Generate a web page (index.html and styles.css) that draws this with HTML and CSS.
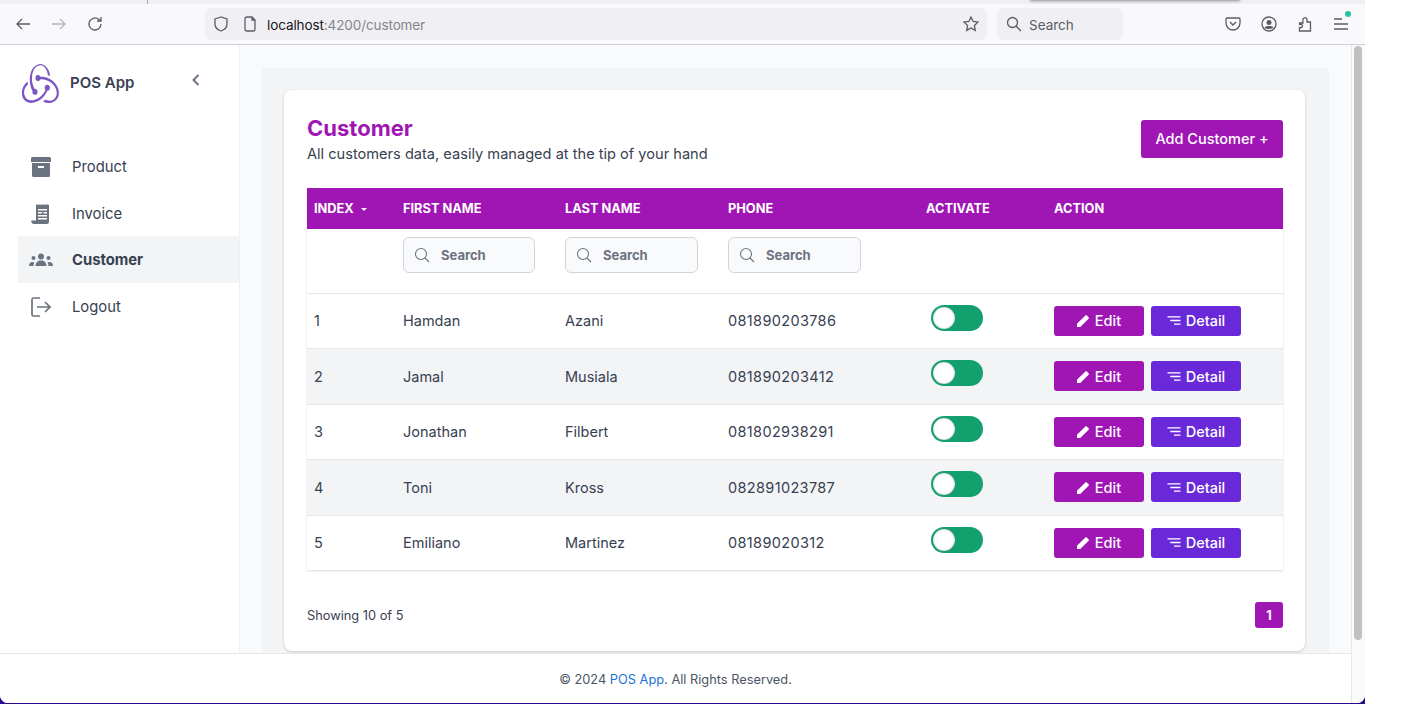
FILE: index.html
```html
<!DOCTYPE html>
<html>
<head>
<title>POS App</title>
<link rel="stylesheet" href="styles.css">
</head>
<body>
<div class="window">
  <div class="tabstrip"><span class="tab-divider"></span><span class="tab-shadow"></span></div>

  <div class="toolbar">
    <div class="nav-buttons">
      <svg class="tool-icon" viewBox="0 0 16 16"><path d="M15 8H2M7 3 2 8l5 5"/></svg>
      <svg class="tool-icon muted" viewBox="0 0 16 16"><path d="M1 8h13M9 3l5 5-5 5"/></svg>
      <svg class="tool-icon" viewBox="0 0 16 16"><path d="M14 8a6 6 0 1 1-2-4.500L14 5M14 1v4h-4"/></svg>
    </div>
    <div class="urlbar">
      <svg class="tool-icon" viewBox="0 0 16 16"><path d="M8 1 2 3v5c0 3.500 3 6 6 7 3-1 6-3.500 6-7V3z"/></svg>
      <svg class="tool-icon page-icon" viewBox="0 0 16 16"><path d="M3 3a2 2 0 0 1 2-2h5l3 3v9a2 2 0 0 1-2 2H5a2 2 0 0 1-2-2zM10 1v3h3"/></svg>
      <span class="url"><b>localhost</b>:4200/customer</span>
      <svg class="tool-icon star" viewBox="0 0 16 16"><path d="m8 1 2.100 4.500 4.900.6-3.600 3.400.9 4.900L8 11.900l-4.300 2.500.9-4.900L1 6.100l4.900-.6z"/></svg>
    </div>
    <div class="searchbar">
      <svg class="tool-icon" viewBox="0 0 16 16"><circle cx="6.500" cy="6.500" r="5"/><path d="m10 10 5 5"/></svg>
      <span>Search</span>
    </div>
    <div class="tool-right">
      <svg class="tool-icon" viewBox="0 0 16 16"><path d="M2 2h12a1 1 0 0 1 1 1v4a7 7 0 0 1-14 0V3a1 1 0 0 1 1-1zM5 6l3 3 3-3"/></svg>
      <svg class="tool-icon" viewBox="0 0 16 16"><circle cx="8" cy="8" r="7"/><circle class="solid" cx="8" cy="6.500" r="2.500"/><path class="solid" d="M3.500 11.500c1-2 8-2 9 0-1 2-8 2-9 0z"/></svg>
      <svg class="tool-icon" viewBox="0 0 16 16"><path d="M2.500 7H6L5.800 4a2.200 2.200 0 0 1 4.200-1L10 6h3.500v9h-11v-3.500c1.500.5 3-.3 3-1.500s-1.500-2-3-1.500z"/></svg>
      <div class="menu-icon">
        <svg class="tool-icon" viewBox="0 0 16 16"><path d="M1 3h8M1 8h14M1 13h14"/></svg>
        <span class="update-dot"></span>
      </div>
    </div>
  </div>

  <div class="viewport">
    <div class="page">
      <div class="page-body">
        <aside class="sidebar">
          <div class="brand">
            <svg class="brand-logo" viewBox="0 1.500 24 21.800" preserveAspectRatio="none"><path d="M16.634 16.504c.87-.075 1.543-.84 1.5-1.754-.047-.914-.796-1.648-1.709-1.648h-.061a1.71 1.71 0 00-1.648 1.769c.03.479.226.869.494 1.153-1.048 2.038-2.621 3.536-5.004 4.795-1.603.838-3.296 1.154-4.944.93-1.378-.195-2.456-.81-3.116-1.799-.988-1.499-1.078-3.116-.255-4.734.6-1.17 1.499-2.023 2.099-2.443a9.96 9.96 0 01-.42-1.543C-.868 14.408-.583 18.752.75 20.805c.998 1.513 3.026 2.456 5.264 2.456.6 0 1.23-.044 1.843-.194 3.886-.75 6.83-3.072 8.527-6.57zm5.333-3.746c-2.307-2.698-5.7-4.186-9.57-4.186h-.51c-.27-.54-.84-.879-1.468-.879h-.045A1.71 1.71 0 008.724 9.464c.03.913.795 1.648 1.708 1.648h.061a1.71 1.71 0 001.499-1.049h.57c2.294 0 4.456.66 6.425 1.974 1.499.998 2.577 2.308 3.177 3.896.51 1.288.48 2.546-.06 3.597-.84 1.603-2.263 2.472-4.135 2.472-1.199 0-2.352-.36-2.952-.63-.345.3-.93.78-1.348 1.08 1.303.6 2.621.93 3.896.93 2.907 0 5.063-1.618 5.872-3.236.87-1.753.81-4.77-1.469-7.392zM6.665 17.088c.03.914.8 1.648 1.709 1.648h.06a1.708 1.708 0 001.648-1.768c-.03-.915-.795-1.649-1.708-1.649h-.06c-.06 0-.15 0-.226.03-1.243-2.07-1.768-4.305-1.573-6.732.12-1.828.72-3.416 1.798-4.734.9-1.124 2.593-1.68 3.746-1.708 3.236-.06 4.6 3.97 4.689 5.579.39.09 1.05.3 1.5.45C17.902 4.327 14.95 1.5 12.03 1.5c-2.727 0-5.333 1.979-6.33 4.885-1.394 3.875-.48 7.6 1.214 10.536-.15.21-.24.54-.24.81z"/></svg>
            <span class="brand-name">POS App</span>
            <svg class="collapse" viewBox="0 0 10 14"><path d="M7.500 2 2.500 7l5 5"/></svg>
          </div>
          <nav class="menu">
            <a class="menu-item">
              <svg class="menu-svg" viewBox="0 0 20 20"><path d="M0 1.500A1.500 1.500 0 0 1 1.500 0h17A1.500 1.500 0 0 1 20 1.500V5H0zM1 6h18v12.500a1.500 1.500 0 0 1-1.500 1.500h-15A1.500 1.500 0 0 1 1 18.500zm6 3v2h6V9z" fill-rule="evenodd"/></svg>
              Product
            </a>
            <a class="menu-item">
              <svg class="menu-svg" viewBox="0 0 20 20"><path d="M5 1l1.200-.8 1.300.8 1.200-.8L10 1l1.200-.8 1.300.8 1.200-.8L15 1l1.200-.8L18 1v16.500a2.500 2.500 0 0 1-2.500 2.500H3a3 3 0 0 1-2.700-2v-1.500H5zm2 4v1.500h9V5zm0 3v1.500h4V8zm5.500 0v1.500H16V8zM7 11v1.500h9V11zm0 3v1.500h9V14z" fill-rule="evenodd"/></svg>
              Invoice
            </a>
            <a class="menu-item active">
              <svg class="menu-svg wide" viewBox="0 0 24 14"><circle cx="12" cy="3.500" r="3"/><circle cx="4.500" cy="5" r="2"/><circle cx="19.500" cy="5" r="2"/><path d="M6.500 13c0-3.500 2.500-5.500 5.500-5.500s5.500 2 5.500 5.500zM0 13c0-2.500 1.500-4 3.500-4 1 0 1.500.3 2 .6-.7 1-1 2.100-1 3.400zM24 13c0-2.500-1.500-4-3.500-4-1 0-1.500.3-2 .6.700 1 1 2.100 1 3.400z"/></svg>
              Customer
            </a>
            <a class="menu-item">
              <svg class="menu-svg line" viewBox="0 0 20 20"><path d="M9 1H2.500A1.500 1.500 0 0 0 1 2.500v15A1.500 1.500 0 0 0 2.500 19H9M6 10h13M14 5l5 5-5 5"/></svg>
              Logout
            </a>
          </nav>
        </aside>

        <main class="content">
          <div class="panel">
            <section class="card">
              <div class="card-head">
                <div>
                  <h1 class="card-title">Customer</h1>
                  <p class="card-sub">All customers data, easily managed at the tip of your hand</p>
                </div>
                <button class="add-btn">Add Customer +</button>
              </div>

              <table class="grid">
                <colgroup>
                  <col class="col-index">
                  <col class="col-first">
                  <col class="col-last">
                  <col class="col-phone">
                  <col class="col-activate">
                  <col class="col-action">
                </colgroup>
                <thead>
                  <tr class="head-row">
                    <th>INDEX <span class="sort-caret"></span></th>
                    <th>FIRST NAME</th>
                    <th>LAST NAME</th>
                    <th>PHONE</th>
                    <th>ACTIVATE</th>
                    <th>ACTION</th>
                  </tr>
                  <tr class="filter-row">
                    <td></td>
                    <td><div class="filter"><svg viewBox="0 0 16 16"><circle cx="7" cy="7" r="5.500"/><path d="m11 11 4 4"/></svg><span>Search</span></div></td>
                    <td><div class="filter filter-wide"><svg viewBox="0 0 16 16"><circle cx="7" cy="7" r="5.500"/><path d="m11 11 4 4"/></svg><span>Search</span></div></td>
                    <td><div class="filter filter-wide"><svg viewBox="0 0 16 16"><circle cx="7" cy="7" r="5.500"/><path d="m11 11 4 4"/></svg><span>Search</span></div></td>
                    <td></td>
                    <td></td>
                  </tr>
                </thead>
                <tbody id="rows"></tbody>
              </table>

              <div class="card-foot">
                <span>Showing 10 of 5</span>
                <span class="page-num">1</span>
              </div>
            </section>
          </div>
        </main>
      </div>

      <footer class="footer">© 2024 <a>POS App</a>. All Rights Reserved.</footer>
    </div>
    <div class="scrollbar"><div class="scroll-thumb"></div></div>
  </div>
</div>

<script>
const customers = [
  [1, "Hamdan", "Azani", "081890203786"],
  [2, "Jamal", "Musiala", "081890203412"],
  [3, "Jonathan", "Filbert", "081802938291"],
  [4, "Toni", "Kross", "082891023787"],
  [5, "Emiliano", "Martinez", "08189020312"]
];

document.getElementById("rows").innerHTML = customers.map(c => `
  <tr>
    <td>${c[0]}</td>
    <td>${c[1]}</td>
    <td>${c[2]}</td>
    <td class="phone">${c[3]}</td>
    <td><span class="switch"><span class="knob"></span></span></td>
    <td>
      <div class="actions">
        <button class="btn btn-edit"><svg viewBox="0 0 14 14"><path d="M0 14v-3.500L9 1.500a1 1 0 0 1 1.500 0l2 2a1 1 0 0 1 0 1.500L3.500 14z"/></svg>Edit</button>
        <button class="btn btn-detail"><svg class="lines" viewBox="0 0 14 14"><path d="M0 3h14M3 7h11M7 11h7"/></svg>Detail</button>
      </div>
    </td>
  </tr>`).join("");
</script>
</body>
</html>
```

FILE: styles.css
```css
html, body {
  margin: 0;
  height: 100%;
  background-color: #fff;
  overflow: hidden;
}

body {
  font-family: "Inter", "Liberation Sans", sans-serif;
  color: #374151;
}

.window {
  width: 1365px;
  height: 704px;
  box-sizing: border-box;
  padding-bottom: 1px;
  background-color: #2a0a8a;
  display: flex;
  flex-direction: column;
}

/* browser chrome */
.tabstrip {
  height: 4px;
  background-color: #f0f0f4;
  position: relative;
  flex: none;
}

.tab-divider {
  position: absolute;
  left: 147px;
  top: 0;
  width: 1px;
  height: 4px;
  background-color: #a9a9ad;
}

.tab-shadow {
  position: absolute;
  left: 1030px;
  top: -2px;
  width: 210px;
  height: 2px;
  box-shadow: 0 1px 3px rgba(0, 0, 0, 0.5);
}

.toolbar {
  height: 41px;
  flex: none;
  box-sizing: border-box;
  background-color: #f9f9fb;
  border-bottom: 1px solid #cfcfd8;
  display: flex;
  align-items: center;
  padding-left: 15px;
}

.tool-icon {
  width: 16px;
  height: 16px;
  fill: none;
  stroke: #5b5b66;
  stroke-width: 1.300;
  flex: none;
}

.tool-icon.muted {
  stroke: #b5b5ba;
}

.tool-icon .solid {
  fill: #5b5b66;
  stroke: none;
}

.nav-buttons {
  display: flex;
  gap: 20px;
  width: 190px;
}

.urlbar {
  width: 782px;
  height: 32px;
  box-sizing: border-box;
  background-color: #f0f0f4;
  border-radius: 5px;
  display: flex;
  align-items: center;
  padding: 0 8px;
  font-size: 13.500px;
  color: #85858d;
}

.page-icon {
  margin-left: 13px;
}

.url {
  margin-left: 9px;
  padding-top: 2px;
  flex: 1;
  letter-spacing: -0.1px;
}

.url b {
  font-weight: 400;
  color: #15141a;
}

.searchbar {
  width: 126px;
  height: 32px;
  margin-left: 10px;
  box-sizing: border-box;
  background-color: #f0f0f4;
  border-radius: 5px;
  display: flex;
  align-items: center;
  gap: 7px;
  padding-left: 9px;
  font-size: 13.500px;
  color: #5b5b66;
}

.searchbar span {
  padding-top: 2px;
}

.tool-right {
  display: flex;
  gap: 20px;
  margin-left: 102px;
}

.menu-icon {
  position: relative;
  height: 16px;
}

.update-dot {
  position: absolute;
  right: -2px;
  top: -5px;
  width: 6px;
  height: 6px;
  border-radius: 50%;
  background-color: #2ac3a2;
}

/* page area */
.viewport {
  flex: 1;
  display: flex;
  min-height: 0;
  background-color: #fff;
  border-radius: 0 0 8px 8px;
  overflow: hidden;
}

.page {
  flex: 1;
  display: flex;
  flex-direction: column;
  min-width: 0;
}

.page-body {
  flex: 1;
  display: flex;
  min-height: 0;
}

.scrollbar {
  width: 13px;
  flex: none;
  background-color: #fafafa;
  border-left: 1px solid #e8e8e8;
  padding-top: 1px;
}

.scroll-thumb {
  width: 8px;
  height: 594px;
  margin-left: 2px;
  border-radius: 4px;
  background-color: #c1c1c1;
}

/* sidebar */
.sidebar {
  width: 240px;
  flex: none;
  box-sizing: border-box;
  background-color: #fff;
  border-right: 1px solid #eef0f2;
  padding-left: 18px;
}

.brand {
  display: flex;
  align-items: center;
  height: 76px;
  padding-left: 4px;
}

.brand-logo {
  width: 37px;
  height: 39px;
  fill: #7e57c2;
  flex: none;
}

.brand-name {
  font-size: 15px;
  font-weight: 600;
  margin: 0 0 2px 11px;
  width: 121px;
}

.collapse {
  width: 10px;
  height: 14px;
  margin-bottom: 6px;
  fill: none;
  stroke: #6b7280;
  stroke-width: 2;
}

.menu {
  margin-top: 22px;
}

.menu-item {
  display: flex;
  align-items: center;
  height: 46.500px;
  box-sizing: border-box;
  padding: 2px 0 0 54px;
  position: relative;
  font-size: 14.800px;
}

.menu-item.active {
  background-color: #f3f4f6;
  font-weight: 700;
}

.menu-svg {
  position: absolute;
  left: 13px;
  top: 14px;
  width: 20px;
  height: 20px;
  fill: #6b7280;
}

.menu-svg.wide {
  left: 11px;
  width: 24px;
  height: 14px;
  top: 17px;
}

.menu-svg.line {
  fill: none;
  stroke: #6b7280;
  stroke-width: 1.700;
}

/* content */
.content {
  flex: 1;
  min-width: 0;
  background-color: #f9fafb;
  padding: 23px 22px 0;
  overflow: hidden;
}

.panel {
  background-color: #f3f4f6;
  padding: 22px 24px 30px 22px;
}

.card {
  height: 561px;
  box-sizing: border-box;
  background-color: #fff;
  border-radius: 8px;
  box-shadow: 0 1px 3px rgba(0, 0, 0, 0.18);
  padding: 0 22px 0 23px;
}

.card-head {
  display: flex;
  justify-content: space-between;
  height: 98px;
  padding-top: 26px;
  box-sizing: border-box;
}

.card-title {
  margin: 0;
  font-size: 22px;
  line-height: 25px;
  font-weight: 700;
  color: #a016b4;
}

.card-sub {
  margin: 3px 0 0;
  font-size: 14.600px;
  line-height: 20px;
}

.add-btn {
  width: 142px;
  height: 38px;
  margin-top: 4px;
  padding: 0 0 2px;
  border: none;
  border-radius: 3px;
  background-color: #a016b4;
  color: #fff;
  font-family: inherit;
  font-size: 14.500px;
  font-weight: 500;
}

/* table */
.grid {
  width: 976px;
  table-layout: fixed;
  border-collapse: collapse;
  font-size: 14.500px;
  box-shadow: 0 1px 2px rgba(0, 0, 0, 0.15);
}

.col-index { width: 89px; }
.col-first { width: 162px; }
.col-last { width: 163px; }
.col-phone { width: 198px; }
.col-activate { width: 128px; }
.col-action { width: 236px; }

.head-row th {
  height: 41px;
  padding: 0 7px;
  background-color: #a016b4;
  color: #fff;
  font-size: 12.800px;
  font-weight: 700;
  text-align: left;
}

.sort-caret {
  display: inline-block;
  margin-left: 4px;
  vertical-align: middle;
  border-left: 3px solid transparent;
  border-right: 3px solid transparent;
  border-top: 3px solid #fff;
}

.filter-row td {
  height: 64px;
  padding: 0 7px;
  box-sizing: border-box;
  border: none;
}

.filter {
  width: 132px;
  height: 36px;
  margin-bottom: 12px;
  box-sizing: border-box;
  background-color: #f9fafb;
  border: 1px solid #d1d5db;
  border-radius: 6px;
  display: flex;
  align-items: center;
  gap: 11px;
  padding-left: 10px;
  font-size: 13px;
  font-weight: 700;
  color: #6b7280;
}

.filter-wide {
  width: 133px;
}

.filter svg {
  width: 16px;
  height: 16px;
  fill: none;
  stroke: #6b7280;
  stroke-width: 1.100;
}

#rows tr {
  height: 55.500px;
  border-top: 1px solid #e5e7eb;
}

#rows tr:last-child {
  height: 55px;
}

#rows tr:nth-child(even) {
  background-color: #f3f4f6;
}

#rows td {
  padding: 0 7px;
}

#rows td.phone {
  letter-spacing: 0.35px;
}

.switch {
  display: block;
  width: 52px;
  height: 26px;
  margin: 0 0 6px 5px;
  border-radius: 13px;
  background-color: #13a06f;
  position: relative;
}

.knob {
  position: absolute;
  left: 2px;
  top: 2px;
  width: 22px;
  height: 22px;
  border-radius: 50%;
  background-color: #fff;
  box-shadow: inset 0 0 2px rgba(0, 0, 0, 0.4);
}

.actions {
  display: flex;
  gap: 7px;
}

.btn {
  width: 90px;
  height: 30px;
  border: none;
  border-radius: 3px;
  color: #fff;
  font-family: inherit;
  font-size: 14.500px;
  font-weight: 500;
  display: flex;
  align-items: center;
  justify-content: center;
  gap: 5px;
}

.btn svg {
  width: 13px;
  height: 13px;
  fill: #fff;
  flex: none;
}

.btn svg.lines {
  fill: none;
  stroke: #fff;
  stroke-width: 1.400;
  width: 14px;
}

.btn-edit {
  background-color: #a016b4;
}

.btn-detail {
  background-color: #6a29d9;
}

.card-foot {
  display: flex;
  justify-content: space-between;
  align-items: center;
  margin-top: 32px;
  font-size: 12.800px;
}

.page-num {
  width: 28px;
  height: 26px;
  border-radius: 3px;
  background-color: #a016b4;
  color: #fff;
  font-weight: 700;
  display: flex;
  align-items: center;
  justify-content: center;
}

/* footer */
.footer {
  height: 50px;
  flex: none;
  box-sizing: border-box;
  background-color: #fff;
  border-top: 1px solid #e5e7eb;
  text-align: center;
  line-height: 51px;
  font-size: 12.800px;
  color: #4b5563;
}

.footer a {
  color: #1a73d9;
}
```
